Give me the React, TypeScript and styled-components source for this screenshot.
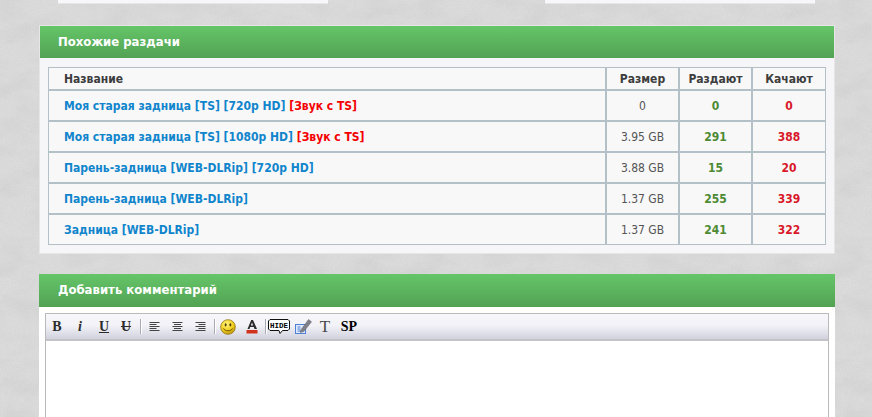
import React from "react";
import styled, { createGlobalStyle } from "styled-components";

const noise = `url("data:image/svg+xml,${encodeURIComponent(
  `<svg xmlns='http://www.w3.org/2000/svg' width='420' height='420'><filter id='a' x='0' y='0' width='100%' height='100%'><feTurbulence type='fractalNoise' baseFrequency='0.03 0.05' numOctaves='4' seed='11' stitchTiles='stitch'/><feColorMatrix values='0 0 0 0 0.55 0 0 0 0 0.55 0 0 0 0 0.55 1.6 0 0 0 -0.6'/></filter><filter id='b' x='0' y='0' width='100%' height='100%'><feTurbulence type='fractalNoise' baseFrequency='0.7' numOctaves='2' seed='3' stitchTiles='stitch'/><feColorMatrix values='0 0 0 0 0.5 0 0 0 0 0.5 0 0 0 0 0.5 1.2 0 0 0 -0.45'/></filter><rect width='420' height='420' fill='#dbdbdb'/><rect width='420' height='420' filter='url(#a)' opacity='0.38'/><rect width='420' height='420' filter='url(#b)' opacity='0.3'/></svg>`
)}")`;

const Global = createGlobalStyle`
  html, body { margin: 0; padding: 0; height: 100%; overflow: hidden; }
  body {
    background: #d7d7d7 ${noise};
    font-family: "DejaVu Sans Condensed", "DejaVu Sans", sans-serif;
  }
`;

const Page = styled.div`
  width: 872px;
  height: 417px;
  overflow: hidden;
`;

const TopStrips = styled.div`
  display: flex;
  justify-content: space-between;
  padding: 0 57px 0 58px;
  height: 3px;
  margin-bottom: 22px;
`;

const Strip = styled.div`
  width: 270px;
  height: 3px;
  background: #f7f7f9;
  box-shadow: 0 1px 0 #e6e6e6;
`;

const Panel = styled.section`
  margin-left: 39px;
  width: 796px;
  box-sizing: border-box;
  background: #f6f6f8;
  border: 1px solid #e6e6e6;
  margin-bottom: 20px;
`;

const PlainPanel = styled.section`
  margin-left: 39px;
  width: 796px;
  background: #ffffff;
`;

const PanelHead = styled.h2<{ $h: number }>`
  margin: 0;
  height: ${(p) => p.$h}px;
  line-height: ${(p) => p.$h - 1}px;
  color: #fff;
  font-size: 13px;
  font-weight: 700;
  background: linear-gradient(#65c568, #52a254);
`;

const HeadLabel = styled.span<{ $x: number }>`
  margin-left: ${(p) => p.$x}px;
`;

const PanelBody = styled.div`
  padding: 9px 8px 8px;
`;

const Table = styled.table`
  width: 778px;
  box-sizing: border-box;
  table-layout: fixed;
  border-collapse: separate;
  border-spacing: 0;
  border: 1px solid #b3c0c7;
  background: #f8f8f9;
`;

const Th = styled.th<{ $w?: number; $left?: boolean; $last?: boolean }>`
  box-sizing: border-box;
  height: 23px;
  padding: 0 0 0 ${(p) => (p.$left ? "15px" : "0")};
  width: ${(p) => (p.$w ? `${p.$w}px` : "auto")};
  border-bottom: 2px solid #b3c0c7;
  border-right: ${(p) => (p.$last ? "0" : "2px solid #b3c0c7")};
  text-align: ${(p) => (p.$left ? "left" : "center")};
  color: #3d3d3d;
  font-weight: 700;
  font-size: 12px;
`;

const Row = styled.tr<{ $last?: boolean }>`
  height: ${(p) => (p.$last ? 29 : 31)}px;
  & > td {
    box-sizing: border-box;
    border-bottom: ${(p) => (p.$last ? "0" : "2px solid #b3c0c7")};
  }
`;

const NameCell = styled.td`
  padding: 0 0 0 15px;
  border-right: 2px solid #b3c0c7;
  font-weight: 700;
  font-size: 12px;
  color: #1085cc;
  white-space: nowrap;
`;

const Tag = styled.span`
  color: #f40000;
`;

const SizeCell = styled.td`
  border-right: 2px solid #b3c0c7;
  text-align: center;
  color: #555;
  font-size: 12px;
`;

const CountCell = styled.td<{ $tone: "seed" | "leech" }>`
  border-right: ${(p) => (p.$tone === "seed" ? "2px solid #b3c0c7" : "0")};
  text-align: center;
  font-weight: 700;
  font-size: 12px;
  color: ${(p) => (p.$tone === "seed" ? "#4d8a33" : "#d9182a")};
`;

const EditorWrap = styled.div`
  padding: 6px 6px 0;
`;

const Editor = styled.div`
  border: 1px solid #bababa;
  height: 120px;
  background: #fff;
`;

const Toolbar = styled.div`
  display: flex;
  align-items: center;
  height: 25px;
  padding-left: 2px;
  background: linear-gradient(#f6f6fb 0%, #f2f2f7 45%, #d2d2df 100%);
  border-bottom: 2px solid #c4c4c8;
`;

const Btn = styled.span<{ $w: number }>`
  display: flex;
  align-items: center;
  justify-content: center;
  width: ${(p) => p.$w}px;
  height: 22px;
  flex: none;
`;

const Glyph = styled.span<{ $italic?: boolean; $under?: boolean; $strike?: boolean; $thin?: boolean; $dark?: boolean; $size?: number }>`
  font-family: "Liberation Serif", serif;
  font-weight: ${(p) => (p.$thin ? 400 : 700)};
  font-size: ${(p) => p.$size ?? 14}px;
  line-height: 1;
  color: ${(p) => (p.$thin ? "#4a4a4a" : p.$dark ? "#000" : "#2c2c2c")};
  font-style: ${(p) => (p.$italic ? "italic" : "normal")};
  text-decoration: ${(p) => (p.$under ? "underline" : p.$strike ? "line-through" : "none")};
`;

const Sep = styled.span<{ $gap: number }>`
  flex: none;
  width: 1px;
  height: 15px;
  margin: 0 ${(p) => p.$gap}px;
  background: #a9a9b3;
  box-shadow: 1px 0 0 #fff;
`;

const HideLabel = styled.text`
  font-family: "Liberation Mono", monospace;
  font-size: 7.5px;
  font-weight: 700;
`;

const AlignIcon = ({ kind }: { kind: "l" | "c" | "r" }) => {
  const rows = [10, 7, 10, 7, 10];
  return (
    <svg width="11" height="10" viewBox="0 0 11 10">
      {rows.map((w, i) => {
        const x = kind === "l" ? 0.5 : kind === "r" ? 10.5 - w : (11 - w) / 2;
        return <path key={i} d={`M${x} ${i * 2 + 0.5}h${w}`} stroke="#444" strokeWidth="1" />;
      })}
    </svg>
  );
};

const Smiley = () => (
  <svg width="16" height="16" viewBox="0 0 17 17">
    <defs>
      <radialGradient id="sm" cx="40%" cy="30%" r="75%">
        <stop offset="0" stopColor="#fff27a" />
        <stop offset="0.6" stopColor="#f2cf1e" />
        <stop offset="1" stopColor="#b98d0c" />
      </radialGradient>
    </defs>
    <circle cx="8.5" cy="8.5" r="7.8" fill="url(#sm)" stroke="#8f7410" strokeWidth="0.8" />
    <ellipse cx="6" cy="6.2" rx="1" ry="1.7" fill="#4a3a05" />
    <ellipse cx="11" cy="6.2" rx="1" ry="1.7" fill="#4a3a05" />
    <path d="M3.8 10c1.2 3.4 8.2 3.4 9.4 0" fill="none" stroke="#5a4606" strokeWidth="1" />
  </svg>
);

const ColorA = () => (
  <svg width="12" height="14" viewBox="0 0 12 14">
    <path d="M1.5 9h2l.7-2h3.6l.7 2h2.5L7 0H5.2zM4.9 5.5l1.1-3 1.1 3z" fill="#2b2b2b" />
    <rect x="0.5" y="10" width="11" height="3.5" fill="#d0321c" />
  </svg>
);

const HideIcon = () => (
  <svg width="22" height="15" viewBox="0 0 22 15">
    <path d="M2 .5h18l1.5 1.5v8L20 11.5h-5.5L12 14.5 11 11.5H2L.5 10V2z" fill="#fff" stroke="#111" />
    <HideLabel x="11" y="8.5" textAnchor="middle">HIDE</HideLabel>
  </svg>
);

const NoteIcon = () => (
  <svg width="17" height="15" viewBox="0 0 17 15">
    <rect x="0.5" y="5.5" width="10" height="9" fill="#dfeafb" stroke="#4f7fd6" />
    <path d="M2.5 8h3M2.5 10h3M2.5 12h3" stroke="#4f7fd6" strokeWidth="1" />
    <path d="M5.5 11.5L13.5.5l3 2.3L8.8 12.5l-3.5 1z" fill="#808089" stroke="#5d5d66" strokeWidth="0.5" />
  </svg>
);

type R = { name: string; tag: string; size: string; seed: string; leech: string };
const rows: R[] = [
  { name: "Моя старая задница [TS] [720p HD]", tag: "[Звук с TS]", size: "0", seed: "0", leech: "0" },
  { name: "Моя старая задница [TS] [1080p HD]", tag: "[Звук с TS]", size: "3.95 GB", seed: "291", leech: "388" },
  { name: "Парень-задница [WEB-DLRip] [720p HD]", tag: "", size: "3.88 GB", seed: "15", leech: "20" },
  { name: "Парень-задница [WEB-DLRip]", tag: "", size: "1.37 GB", seed: "255", leech: "339" },
  { name: "Задница [WEB-DLRip]", tag: "", size: "1.37 GB", seed: "241", leech: "322" },
];

export default function App() {
  return (
    <Page>
      <Global />
      <TopStrips>
        <Strip />
        <Strip />
      </TopStrips>
      <Panel>
        <PanelHead $h={32}>
          <HeadLabel $x={18}>Похожие раздачи</HeadLabel>
        </PanelHead>
        <PanelBody>
          <Table>
            <thead>
              <tr>
                <Th $left>Название</Th>
                <Th $w={73}>Размер</Th>
                <Th $w={73}>Раздают</Th>
                <Th $w={72} $last>Качают</Th>
              </tr>
            </thead>
            <tbody>
              {rows.map((r, i) => (
                <Row key={r.name} $last={i === rows.length - 1}>
                  <NameCell>
                    {r.name}
                    {r.tag && <Tag> {r.tag}</Tag>}
                  </NameCell>
                  <SizeCell>{r.size}</SizeCell>
                  <CountCell $tone="seed">{r.seed}</CountCell>
                  <CountCell $tone="leech">{r.leech}</CountCell>
                </Row>
              ))}
            </tbody>
          </Table>
        </PanelBody>
      </Panel>
      <PlainPanel>
        <PanelHead $h={33}>
          <HeadLabel $x={19}>Добавить комментарий</HeadLabel>
        </PanelHead>
        <EditorWrap>
          <Editor>
            <Toolbar>
              <Btn $w={18}><Glyph>B</Glyph></Btn>
              <Btn $w={28}><Glyph $italic>i</Glyph></Btn>
              <Btn $w={20}><Glyph $under>U</Glyph></Btn>
              <Btn $w={24}><Glyph $strike>U</Glyph></Btn>
              <Sep $gap={2} />
              <Btn $w={22}><AlignIcon kind="l" /></Btn>
              <Btn $w={24}><AlignIcon kind="c" /></Btn>
              <Btn $w={22}><AlignIcon kind="r" /></Btn>
              <Sep $gap={3} />
              <Btn $w={20}><Smiley /></Btn>
              <Btn $w={27}><ColorA /></Btn>
              <Sep $gap={0} />
              <Btn $w={26}><HideIcon /></Btn>
              <Btn $w={22}><NoteIcon /></Btn>
              <Btn $w={22}><Glyph $thin $size={17}>T</Glyph></Btn>
              <Btn $w={26}><Glyph $dark>SP</Glyph></Btn>
            </Toolbar>
          </Editor>
        </EditorWrap>
      </PlainPanel>
    </Page>
  );
}
